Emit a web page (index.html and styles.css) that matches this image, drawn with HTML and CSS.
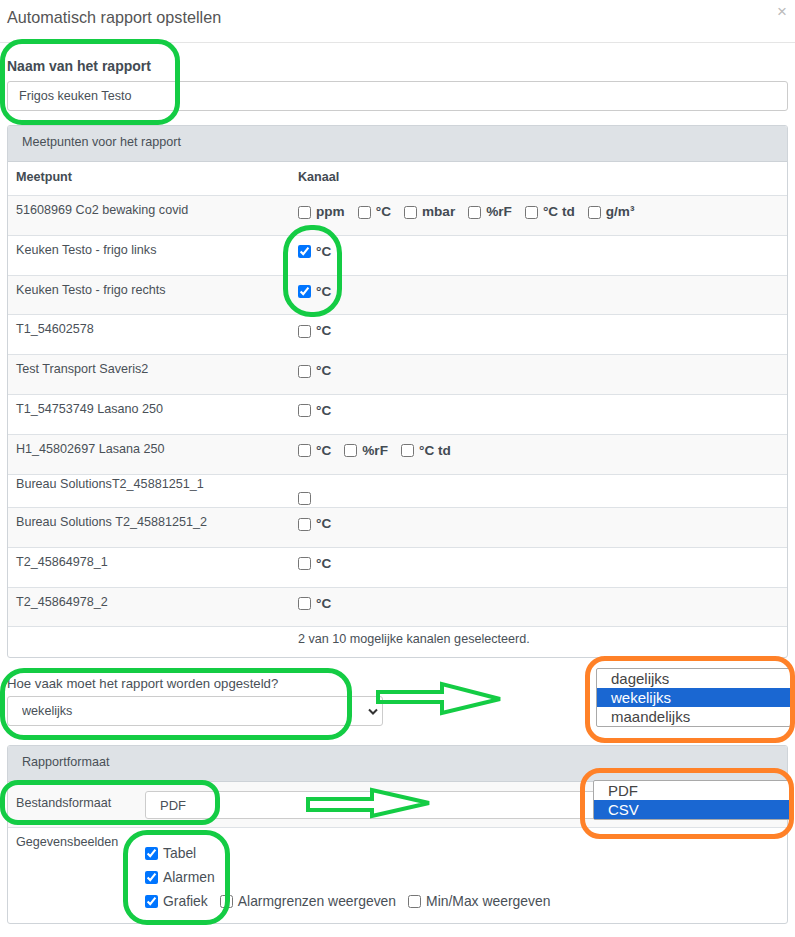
FILE: index.html
```html
<!DOCTYPE html>
<html lang="nl">

<head>
  <meta charset="UTF-8">
  <meta name="viewport" content="width=device-width, initial-scale=1.0">
  <title>Automatisch rapport opstellen</title>
  <link rel="stylesheet" href="styles.css">
</head>

<body>
  <div class="modal">
    <div class="modal-header">
      <h4 class="modal-title">Automatisch rapport opstellen</h4>
      <span class="close">&times;</span>
    </div>

    <div class="modal-body">
      <div class="form-group">
        <label class="label-bold">Naam van het rapport</label>
        <input class="form-control" type="text" value="Frigos keuken Testo">
      </div>

      <div class="card">
        <div class="card-header">Meetpunten voor het rapport</div>
        <table class="points">
          <thead>
            <tr>
              <th class="col-name">Meetpunt</th>
              <th>Kanaal</th>
            </tr>
          </thead>
          <tbody>
            <tr>
              <td class="name">51608969 Co2 bewaking covid</td>
              <td class="chan-cell">
                <div class="chans">
                  <label class="chan"><input type="checkbox"><span>ppm</span></label>
                  <label class="chan"><input type="checkbox"><span>°C</span></label>
                  <label class="chan"><input type="checkbox"><span>mbar</span></label>
                  <label class="chan"><input type="checkbox"><span>%rF</span></label>
                  <label class="chan"><input type="checkbox"><span>°C td</span></label>
                  <label class="chan"><input type="checkbox"><span>g/m³</span></label>
                </div>
              </td>
            </tr>
            <tr>
              <td class="name">Keuken Testo - frigo links</td>
              <td class="chan-cell"><div class="chans"><label class="chan"><input type="checkbox" checked><span>°C</span></label></div></td>
            </tr>
            <tr>
              <td class="name">Keuken Testo - frigo rechts</td>
              <td class="chan-cell"><div class="chans"><label class="chan"><input type="checkbox" checked><span>°C</span></label></div></td>
            </tr>
            <tr>
              <td class="name">T1_54602578</td>
              <td class="chan-cell"><div class="chans"><label class="chan"><input type="checkbox"><span>°C</span></label></div></td>
            </tr>
            <tr>
              <td class="name">Test Transport Saveris2</td>
              <td class="chan-cell"><div class="chans"><label class="chan"><input type="checkbox"><span>°C</span></label></div></td>
            </tr>
            <tr>
              <td class="name">T1_54753749 Lasano 250</td>
              <td class="chan-cell"><div class="chans"><label class="chan"><input type="checkbox"><span>°C</span></label></div></td>
            </tr>
            <tr>
              <td class="name">H1_45802697 Lasana 250</td>
              <td class="chan-cell">
                <div class="chans">
                  <label class="chan"><input type="checkbox"><span>°C</span></label>
                  <label class="chan"><input type="checkbox"><span>%rF</span></label>
                  <label class="chan"><input type="checkbox"><span>°C td</span></label>
                </div>
              </td>
            </tr>
            <tr class="short">
              <td class="name">Bureau SolutionsT2_45881251_1</td>
              <td class="chan-cell"><div class="chans"><input type="checkbox"></div></td>
            </tr>
            <tr>
              <td class="name">Bureau Solutions T2_45881251_2</td>
              <td class="chan-cell"><div class="chans"><label class="chan"><input type="checkbox"><span>°C</span></label></div></td>
            </tr>
            <tr>
              <td class="name">T2_45864978_1</td>
              <td class="chan-cell"><div class="chans"><label class="chan"><input type="checkbox"><span>°C</span></label></div></td>
            </tr>
            <tr>
              <td class="name">T2_45864978_2</td>
              <td class="chan-cell"><div class="chans"><label class="chan"><input type="checkbox"><span>°C</span></label></div></td>
            </tr>
          </tbody>
          <tfoot>
            <tr>
              <td></td>
              <td>2 van 10 mogelijke kanalen geselecteerd.</td>
            </tr>
          </tfoot>
        </table>
      </div>

      <div class="freq">
        <label>Hoe vaak moet het rapport worden opgesteld?</label>
        <select class="form-control freq-select">
          <option>wekelijks</option>
        </select>
      </div>

      <div class="card card-format">
        <div class="card-header">Rapportformaat</div>
        <div class="fmt-row fmt-file">
          <div class="fmt-label">Bestandsformaat</div>
          <div class="fmt-field"><input class="form-control fmt-input" type="text" value="PDF"></div>
        </div>
        <div class="fmt-row fmt-views">
          <div class="fmt-label">Gegevensbeelden</div>
          <div class="views">
            <div class="view-line">
              <label class="view"><input type="checkbox" checked>Tabel</label>
            </div>
            <div class="view-line">
              <label class="view"><input type="checkbox" checked>Alarmen</label>
            </div>
            <div class="view-line">
              <label class="view"><input type="checkbox" checked>Grafiek</label>
              <label class="view"><input type="checkbox">Alarmgrenzen weergeven</label>
              <label class="view"><input type="checkbox">Min/Max weergeven</label>
            </div>
          </div>
        </div>
      </div>
    </div>

    <!-- annotations drawn over the form -->
    <div class="listbox lb-freq">
      <div class="opt">dagelijks</div>
      <div class="opt sel">wekelijks</div>
      <div class="opt">maandelijks</div>
    </div>
    <div class="listbox lb-file">
      <div class="opt">PDF</div>
      <div class="opt sel">CSV</div>
    </div>

    <div class="mark green g-name"></div>
    <div class="mark green g-check"></div>
    <div class="mark green g-freq"></div>
    <div class="mark green g-file"></div>
    <div class="mark green g-views"></div>
    <div class="mark orange o-freq"></div>
    <div class="mark orange o-file"></div>

    <svg class="arrow arrow-freq" width="136" height="42" viewBox="0 0 136 42">
      <polygon points="6,14 70,14 70,6 128,21 70,35 70,24 6,24" />
    </svg>
    <svg class="arrow arrow-file" width="136" height="42" viewBox="0 0 136 42">
      <polygon points="8,17 72,17 72,8 129,21 72,34 72,28 8,28" />
    </svg>
  </div>
</body>

</html>
```

FILE: styles.css
```css
* {
  box-sizing: border-box;
}

body {
  margin: 0;
  font-family: "Liberation Sans", Arial, sans-serif;
  color: #495057;
  background-color: #fff;
}

.modal {
  position: relative;
  width: 795px;
  height: 937px;
  overflow: hidden;
}

.modal-header {
  display: flex;
  justify-content: space-between;
  height: 43px;
  padding: 0 8px 0 7px;
  border-bottom: 1px solid #e5e5e5;
}

.modal-title {
  margin: 0;
  padding-top: 7px;
  font-size: 16.2px;
  font-weight: normal;
  line-height: 20px;
  color: #555;
}

.close {
  padding-top: 2px;
  font-size: 17px;
  line-height: 20px;
  color: #bbb;
}

.modal-body {
  padding: 0 7px;
}

.form-group {
  padding-top: 15px;
}

.label-bold {
  display: block;
  margin-bottom: 7px;
  font-size: 14px;
  font-weight: bold;
  line-height: 16px;
  color: #434b53;
}

.form-control {
  display: block;
  width: 100%;
  height: 30px;
  padding: 0 11px;
  border: 1px solid #ccc;
  border-radius: 3px;
  font: 12.6px "Liberation Sans", Arial, sans-serif;
  color: #495057;
  background-color: #fff;
}

/* cards */
.card {
  margin-top: 14px;
  border: 1px solid #cfd4d9;
  border-radius: 3px;
  overflow: hidden;
}

.card-header {
  height: 36px;
  padding: 8px 14px 0;
  font-size: 12.6px;
  line-height: 16px;
  background-color: #dee2e6;
  border-bottom: 1px solid #cdd2d7;
}

/* measuring points table */
.points {
  width: 100%;
  table-layout: fixed;
  border-collapse: separate;
  border-spacing: 0;
  font-size: 12.6px;
  line-height: 16px;
}

.points th,
.points td {
  padding: 6px 8px 0;
  text-align: left;
  vertical-align: top;
}

.points th {
  padding: 7px 8px 10px;
  font-weight: bold;
  color: #434b53;
}

.points .col-name {
  width: 282px;
}

.points td {
  border-top: 1px solid #dee2e6;
}

.points .name {
  padding-bottom: 16.8px;
}

.points tbody tr:nth-child(odd) {
  background-color: #f9f9f9;
}

.chans {
  display: flex;
  align-items: center;
  gap: 13px;
  height: 20px;
}

.chans input,
.view input {
  width: 13px;
  height: 13px;
  margin: 0;
}

.chan {
  display: inline-flex;
  align-items: center;
  gap: 5px;
  font-size: 13.6px;
  font-weight: bold;
  color: #434b53;
}

.points .short .name {
  padding-top: 1px;
  padding-bottom: 15.5px;
}

.points .short .chan-cell {
  padding-top: 17px;
}

.points .short .chans {
  height: 13px;
}

.points tfoot td {
  padding: 4px 8px 10px;
}

/* frequency */
.freq {
  margin-top: 18px;
}

.freq label {
  display: block;
  margin-bottom: 4px;
  font-size: 13.2px;
  line-height: 16px;
}

.freq-select {
  width: 376px;
  padding: 0 14px;
  appearance: none;
  background: #fff url("data:image/svg+xml,%3Csvg xmlns='http://www.w3.org/2000/svg' width='10' height='7' viewBox='0 0 10 7'%3E%3Cpath d='M1 1.5l4 4 4-4' fill='none' stroke='%23333' stroke-width='2'/%3E%3C/svg%3E") no-repeat right 4px center;
}

/* report format */
.card-format {
  margin-top: 19px;
}

.fmt-row {
  display: grid;
  grid-template-columns: 137px 1fr;
}

.fmt-label {
  padding-left: 8px;
  font-size: 12.6px;
  line-height: 16px;
}

.fmt-file {
  padding: 9px 8px 8px 0;
  background-color: #f9f9f9;
  border-bottom: 1px solid #dee2e6;
}

.fmt-file .fmt-label {
  padding-top: 4px;
}

.fmt-input {
  height: 28px;
  padding: 0 14px;
  font-size: 13px;
}

.fmt-views {
  padding: 6px 8px 10px 0;
}

.views {
  padding-top: 7px;
}

.view-line {
  display: flex;
  align-items: center;
  gap: 12px;
  height: 24px;
}

.view {
  display: inline-flex;
  align-items: center;
  gap: 5px;
  font-size: 13.9px;
}

/* opened dropdowns pasted on top */
.listbox {
  position: absolute;
  border: 1px solid #a9a9a9;
  border-radius: 2px;
  background-color: #fff;
  font-size: 15px;
  line-height: 19px;
  color: #444;
}

.listbox .opt {
  height: 19px;
  padding-left: 14px;
}

.listbox .sel {
  background-color: #1a67d2;
  color: #fff;
}

.lb-freq {
  left: 596px;
  top: 668px;
  width: 195px;
  height: 59px;
}

.lb-file {
  left: 593px;
  top: 780px;
  width: 198px;
  height: 40px;
}

/* hand drawn markers */
.mark {
  position: absolute;
  border: 5px solid;
}

.green {
  border-color: #14cc44;
}

.orange {
  border-color: #ff8128;
}

.g-name {
  left: 0;
  top: 39px;
  width: 180px;
  height: 86px;
  border-radius: 22px;
}

.g-check {
  left: 283px;
  top: 225px;
  width: 59px;
  height: 92px;
  border-radius: 28px;
}

.g-freq {
  left: 0;
  top: 668px;
  width: 352px;
  height: 72px;
  border-radius: 24px;
}

.g-file {
  left: 0;
  top: 780px;
  width: 220px;
  height: 45px;
  border-radius: 18px;
}

.g-views {
  left: 123px;
  top: 830px;
  width: 107px;
  height: 95px;
  border-radius: 24px;
}

.o-freq {
  left: 585px;
  top: 656px;
  width: 210px;
  height: 87px;
  border-radius: 20px;
}

.o-file {
  left: 580px;
  top: 768px;
  width: 214px;
  height: 71px;
  border-radius: 20px;
}

.arrow {
  position: absolute;
}

.arrow polygon {
  fill: none;
  stroke: #14cc44;
  stroke-width: 4;
}

.arrow-freq {
  left: 372px;
  top: 678px;
}

.arrow-file {
  left: 300px;
  top: 782px;
}
```
